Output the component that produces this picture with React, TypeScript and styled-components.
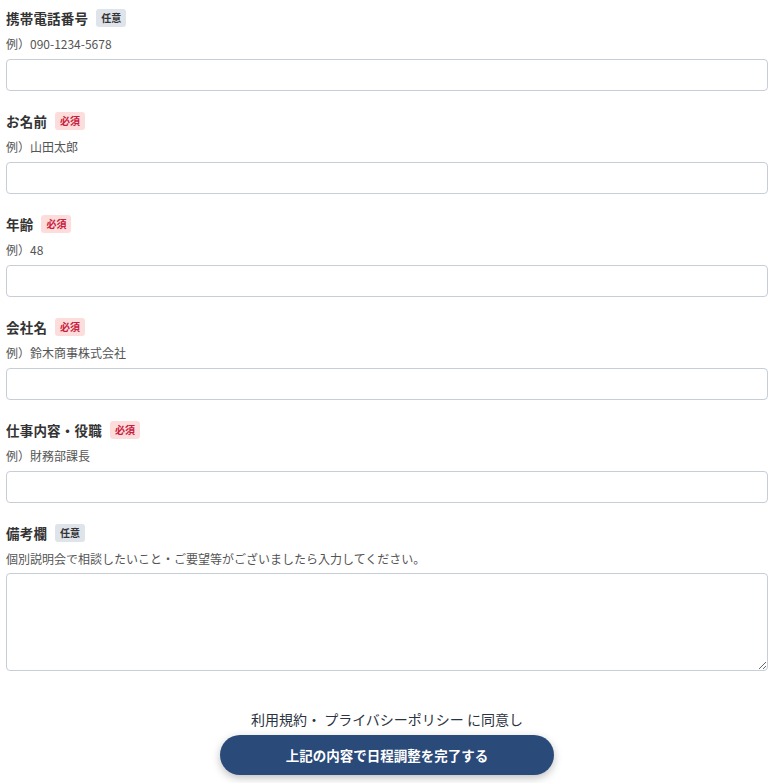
import React from "react";
import styled, { createGlobalStyle } from "styled-components";

const Global = createGlobalStyle`
  html, body { margin: 0; padding: 0; background: #fff; }
  body { font-family: "Noto Sans CJK JP", "Noto Sans", sans-serif; color: #333; }
  * { box-sizing: border-box; }
`;

const Page = styled.div`
  padding: 8px 7px 8px 6px;
  display: flex;
  flex-direction: column;
`;

const Field = styled.div`
  display: flex;
  flex-direction: column;
  margin-bottom: 20px;
`;

const LabelRow = styled.div`
  display: flex;
  align-items: center;
  height: 19px;
  gap: 8px;
`;

const Label = styled.span`
  font-size: 13.5px;
  font-weight: 700;
  color: #333;
  letter-spacing: 0.2px;
`;

const Badge = styled.span<{ $required?: boolean }>`
  display: inline-flex;
  align-items: center;
  justify-content: center;
  height: 18px;
  padding: 0 5px;
  border-radius: 3px;
  font-size: 10px;
  font-weight: 700;
  background: ${(p) => (p.$required ? "#fddcdc" : "#dfe4ea")};
  color: ${(p) => (p.$required ? "#c8203c" : "#333")};
`;

const Example = styled.div`
  margin-top: 9px;
  font-size: 12px;
  line-height: 16px;
  color: #555;
`;

const Input = styled.input`
  margin-top: 7px;
  height: 32px;
  width: 100%;
  border: 1px solid #c6ced8;
  border-radius: 4px;
  background: #fff;
  font-size: 13px;
  padding: 4px 8px;
`;

const TextArea = styled.textarea`
  margin-top: 6px;
  height: 98px;
  width: 100%;
  border: 1px solid #c6ced8;
  border-radius: 4px;
  background: #fff;
  font-size: 13px;
  padding: 4px 8px;
  resize: vertical;
  display: block;
`;

const Submit = styled.div`
  display: flex;
  flex-direction: column;
  align-items: center;
  margin-top: 20px;
`;

const Agree = styled.div`
  font-size: 14px;
  line-height: 16px;
  color: #2b3342;
`;

const Button = styled.button`
  margin-top: 8px;
  width: 334px;
  height: 40px;
  border: none;
  border-radius: 20px;
  background: #2a4a7a;
  color: #fff;
  font-family: inherit;
  font-size: 13.5px;
  font-weight: 700;
  box-shadow: 0 3px 8px rgba(0, 0, 0, 0.25);
  cursor: pointer;
`;

const fields = [
  { label: "携帯電話番号", required: false, example: "例）090-1234-5678" },
  { label: "お名前", required: true, example: "例）山田太郎" },
  { label: "年齢", required: true, example: "例）48" },
  { label: "会社名", required: true, example: "例）鈴木商事株式会社" },
  { label: "仕事内容・役職", required: true, example: "例）財務部課長" },
];

export default function App() {
  return (
    <>
      <Global />
      <Page>
        {fields.map((f) => (
          <Field key={f.label}>
            <LabelRow>
              <Label>{f.label}</Label>
              <Badge $required={f.required}>{f.required ? "必須" : "任意"}</Badge>
            </LabelRow>
            <Example>{f.example}</Example>
            <Input type="text" />
          </Field>
        ))}
        <Field>
          <LabelRow>
            <Label>備考欄</Label>
            <Badge>任意</Badge>
          </LabelRow>
          <Example>個別説明会で相談したいこと・ご要望等がございましたら入力してください。</Example>
          <TextArea />
        </Field>
        <Submit>
          <Agree>利用規約・ プライバシーポリシー に同意し</Agree>
          <Button>上記の内容で日程調整を完了する</Button>
        </Submit>
      </Page>
    </>
  );
}
